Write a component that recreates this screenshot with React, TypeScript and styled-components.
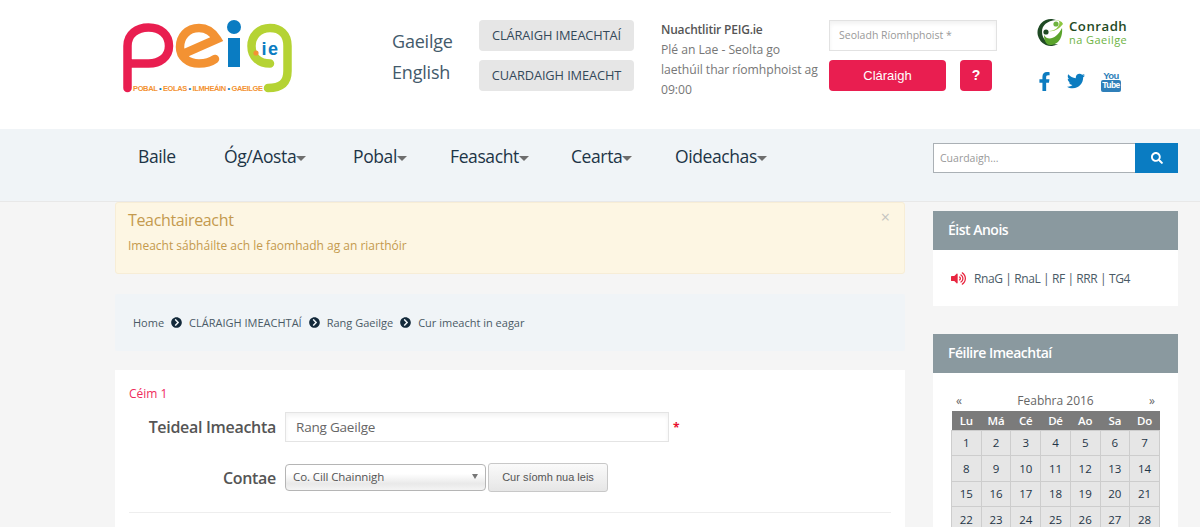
import React from "react";
import styled, { createGlobalStyle } from "styled-components";
import { FaChevronCircleRight, FaFacebookF, FaSearch, FaTwitter, FaVolumeUp } from "react-icons/fa";

const Global = createGlobalStyle`
  html, body { margin: 0; padding: 0; height: 100%; overflow: hidden; background: #f5f5f5; }
  body { font-family: "Open Sans", "Liberation Sans", sans-serif; }
  #root { height: 527px; overflow: hidden; }
  * { box-sizing: border-box; }
`;

const Header = styled.header`
  height: 129px; background: #fff; display: flex; align-items: flex-start; padding-left: 110px;
`;
const LogoSlot = styled.div` width: 282px; padding-top: 10px; `;
const LangCol = styled.div`
  width: 87px; padding-top: 28px; display: flex; flex-direction: column; gap: 5px;
  font-size: 18px; line-height: 26px; letter-spacing: -0.2px; color: #435a6b;
`;
const BtnCol = styled.div` width: 182px; padding-top: 20px; display: flex; flex-direction: column; gap: 9px; `;
const GreyBtn = styled.div`
  width: 155px; height: 31px; border-radius: 4px; background: #e6e6e6; color: #34495a;
  font-size: 12.8px; line-height: 31px; text-align: center; letter-spacing: -0.1px;
`;
const NewsCol = styled.div`
  width: 168px; padding: 20px 6px 0 0; font-size: 12.2px; line-height: 20px; color: #777; letter-spacing: -0.05px;
`;
const NewsTitle = styled.div` font-weight: 600; color: #555; font-size: 12px; letter-spacing: -0.2px; `;
const FormCol = styled.div` width: 208px; padding-top: 20px; `;
const EmailInput = styled.div`
  width: 168px; height: 31px; border: 1px solid #e2e2e2; padding-left: 9px; font-size: 10.5px; line-height: 29px; color: #999;
  box-shadow: inset 0 3px 4px #f2f2f2;
`;
const FormBtns = styled.div` display: flex; gap: 14px; margin-top: 9px; `;
const PinkBtn = styled.div<{ $w: number }>`
  width: ${(p) => p.$w}px; height: 31px; border-radius: 4px; background: #e91e50; color: #fff; text-align: center;
  font-family: "Liberation Sans", sans-serif; font-size: 13px; line-height: 31px;
`;
const QMark = styled.span` font-weight: 700; font-size: 14px; `;
const SocialCol = styled.div` width: 100px; padding-top: 18px; `;
const SocialRow = styled.div`
  display: flex; align-items: center; margin: 16px 0 0 -2.5px; height: 24px; color: #0c7cc0;
`;
const SocialSlot = styled.span<{ $w: number }>` width: ${(p) => p.$w}px; display: flex; `;
const YouTube = styled.span`
  display: flex; flex-direction: column; align-items: center; width: 17px; color: #2f7fb9;
  font-family: "Liberation Sans", sans-serif; font-weight: 700; line-height: 1;
`;
const YouWord = styled.span` font-size: 9.5px; letter-spacing: -0.5px; `;
const TubeWord = styled.span`
  font-size: 8.5px; letter-spacing: -0.5px; background: #2f7fb9; color: #fff; border-radius: 2px; padding: 1px 1px 2px;
`;

const Nav = styled.nav`
  height: 73px; background: #f0f4f7; border-bottom: 1px solid #e8e8e8; display: flex; padding-left: 138px;
`;
const NavItems = styled.div` display: flex; width: 795px; padding-top: 14px; `;
const NavItem = styled.div<{ $w: number }>`
  width: ${(p) => p.$w}px; font-size: 17.5px; font-weight: 500; line-height: 26px; color: #1d3446; letter-spacing: -0.4px; white-space: nowrap;
`;
const Caret = styled.span`
  display: inline-block; width: 0; height: 0; border-left: 5px solid transparent; border-right: 5px solid transparent;
  border-top: 5px solid #6e6e6e; vertical-align: 2px;
`;
const Search = styled.div` width: 245px; height: 30px; margin-top: 14px; display: flex; `;
const SearchBox = styled.div`
  flex: 1; background: #fff; border: 1px solid #aab0b5; border-right: 0; padding-left: 6px; font-size: 10.5px; line-height: 28px; color: #999;
`;
const SearchBtn = styled.div`
  width: 43px; background: #0a7cc2; color: #fff; display: flex; align-items: center; justify-content: center; font-size: 12px;
`;

const Body = styled.div` display: flex; padding-left: 115px; gap: 28px; `;
const Main = styled.main` width: 790px; display: flex; flex-direction: column; `;
const Alert = styled.div`
  height: 72px; background: #fdf6e3; border: 1px solid #f7edd6; border-radius: 3px; padding: 5px 12px; color: #c49a4e; position: relative;
`;
const AlertTitle = styled.div` font-size: 16px; line-height: 24px; letter-spacing: -0.35px; font-weight: 500; `;
const AlertText = styled.div` font-size: 12px; line-height: 20px; margin-top: 4px; `;
const Close = styled.span` position: absolute; top: 4px; right: 14px; font-size: 16px; line-height: 20px; color: #c4c4c0; `;
const Crumbs = styled.div`
  margin-top: 20px; height: 57px; background: #f0f4f7; border-radius: 2px; padding-left: 18px; display: flex; align-items: center; gap: 7px;
  font-size: 11px; color: #4a5a66;
`;
const CrumbIcon = styled(FaChevronCircleRight)` color: #13293a; font-size: 11px; `;
const Card = styled.section` margin-top: 19px; background: #fff; height: 200px; padding: 15px 14px 0; `;
const Step = styled.div` font-size: 12px; line-height: 18px; color: #ef2b5c; `;
const FormRow = styled.div<{ $mt: number }>` display: flex; align-items: center; margin-top: ${(p) => p.$mt}px; `;
const Label = styled.div`
  width: 147px; text-align: right; font-size: 16px; font-weight: 600; color: #555; margin-right: 9px; letter-spacing: -0.3px;
`;
const TitleInput = styled.input`
  width: 384px; height: 30px; border: 1px solid #e4e4e4; box-shadow: inset 0 3px 4px #f3f3f3; padding: 0 10px; outline: 0;
  font-family: inherit; font-size: 13.5px; color: #666; letter-spacing: -0.2px;
`;
const Star = styled.span` color: #e8102f; font-size: 12px; margin-left: 4px; font-weight: 700; `;
const SelectBox = styled.div`
  width: 201px; height: 27px; border: 1px solid #b5b5b5; border-radius: 4px; background: linear-gradient(#fff 35%, #e9e9e9 75%, #f4f4f4);
  display: flex; align-items: center; justify-content: space-between; padding: 0 7px 2px; font-size: 11.5px; color: #555; letter-spacing: -0.1px;
`;
const SelectArrow = styled.span`
  width: 0; height: 0; border-left: 3.5px solid transparent; border-right: 3.5px solid transparent; border-top: 5px solid #777;
`;
const AddBtn = styled.div`
  margin-left: 2px; width: 120px; height: 29px; border: 1px solid #c8c8c8; border-radius: 3px; background: linear-gradient(#fafafa, #e6e6e6);
  text-align: center; font-family: "Liberation Sans", sans-serif; font-size: 11px; line-height: 27px; color: #555;
`;
const Rule = styled.hr` margin: 20px 0 0; border: 0; border-top: 1px solid #eee; `;

const Side = styled.aside` width: 245px; padding-top: 9px; display: flex; flex-direction: column; gap: 28px; `;
const Panel = styled.section` background: #fff; `;
const PanelHead = styled.h3`
  margin: 0; height: 39px; background: #8a999f; color: #fff; padding-left: 15px; font-size: 14px; line-height: 38px; font-weight: 600; letter-spacing: -0.5px;
`;
const Listen = styled.div`
  height: 56px; display: flex; align-items: center; padding: 0 18px; gap: 8px; font-size: 12px; color: #4a5a66; letter-spacing: -0.4px;
`;
const SpeakerIcon = styled(FaVolumeUp)` color: #e8253f; font-size: 15px; `;
const CalWrap = styled.div` padding: 18px 18px 0; height: 200px; `;
const MonthRow = styled.div`
  display: flex; justify-content: space-between; padding: 0 5px; width: 209px; font-size: 12px; line-height: 20px; color: #666;
`;
const CalTable = styled.table` border-collapse: collapse; width: 209px; table-layout: fixed; margin: 0; `;
const Th = styled.th`
  background: #7b7b7b; color: #fff; height: 19px; padding: 0; font-size: 11.5px; font-weight: 600; letter-spacing: -0.2px;
`;
const Td = styled.td`
  background: #e6e6e6; border: 1px solid #cdcdcd; height: 25.6px; padding: 0; text-align: center; font-size: 11.5px; color: #1f3547; font-weight: 500;
`;

function PeigLogo() {
  return (
    <svg width="200" height="100" viewBox="0 0 200 100" fontFamily="Liberation Sans, sans-serif" role="img" aria-label="peig.ie">
      <g fill="none" strokeWidth="8.5" strokeLinecap="round">
        <path stroke="#e91e50" d="M17.5 78 V36 C17.5 24 27 17.5 38.5 17.5 C51 17.5 59 25 59 36 C59 47 50 53.5 38.5 53.5 H22" />
        <path stroke="#f39233" d="M73 44 L107 29 C102 21 96 18 89 18 C77 18 70 27 70 37 C70 47 78 53.5 89 53.5 C96 53.5 101 52 105 49" />
        <path stroke="#b5d334" d="M158 78 C171 78 177.5 73 177.5 61 V36 C177.5 24 170 18 160 18 C149 18 141.5 26 141.5 36 C141.5 47 149 53.5 160 53.5" />
      </g>
      <circle cx="124" cy="17" r="7" fill="#0a7cc2" />
      <rect x="118" y="28" width="12" height="29" fill="#0a7cc2" />
      <circle cx="146" cy="43" r="2.6" fill="#f39233" />
      <text x="151.5" y="45" fontSize="18" fontWeight="700" letterSpacing="1.5" fill="#0a7cc2">ie</text>
      <text x="23" y="81" fontSize="7.5" fontWeight="700" fill="#f39233" textLength="130">
        POBAL <tspan fill="#0a7cc2">•</tspan> EOLAS <tspan fill="#0a7cc2">•</tspan> ILMHEÁIN <tspan fill="#0a7cc2">•</tspan> GAEILGE
      </text>
    </svg>
  );
}

function ConradhLogo() {
  return (
    <svg width="92" height="30" viewBox="0 0 92 30" fontFamily="Open Sans, sans-serif" role="img" aria-label="Conradh na Gaeilge">
      <path d="M15 1 A13.5 13.5 0 1 0 21 26 C12 27 5 22 5 14 C5 7 10 3 19 2 Z" fill="#1f4a24" />
      <path d="M7 17 C11 24 20 20 25 10 C26 17 23 27 13 27 C9 27 7 22 7 17 Z" fill="#5aa32c" />
      <path d="M12 13 C17 14 22 11 26 6 C25 3 21 2 18 2 L22 3 C24 8 18 13 12 13 Z" fill="#8cc63f" />
      <circle cx="9" cy="14" r="2.6" fill="#1f4a24" />
      <circle cx="19" cy="6" r="2.6" fill="#6db33f" />
      <text x="32" y="13" fontSize="13.2" fontWeight="600" letterSpacing="0.5" fill="#1f4a24">Conradh</text>
      <text x="32" y="26" fontSize="11" letterSpacing="0.45" fill="#6db33f">na Gaeilge</text>
    </svg>
  );
}

const navItems: { label: string; w: number; caret?: boolean }[] = [
  { label: "Baile", w: 86 },
  { label: "Óg/Aosta", w: 129, caret: true },
  { label: "Pobal", w: 97, caret: true },
  { label: "Feasacht", w: 121, caret: true },
  { label: "Cearta", w: 104, caret: true },
  { label: "Oideachas", w: 120, caret: true },
];
const days = ["Lu", "Má", "Cé", "Dé", "Ao", "Sa", "Do"];
const weeks = [0, 1, 2, 3].map((w) => days.map((_, d) => w * 7 + d + 1));

export default function App() {
  return (
    <>
      <Global />
      <Header>
        <LogoSlot><PeigLogo /></LogoSlot>
        <LangCol><span>Gaeilge</span><span>English</span></LangCol>
        <BtnCol>
          <GreyBtn>CLÁRAIGH IMEACHTAÍ</GreyBtn>
          <GreyBtn>CUARDAIGH IMEACHT</GreyBtn>
        </BtnCol>
        <NewsCol>
          <NewsTitle>Nuachtlitir PEIG.ie</NewsTitle>
          Plé an Lae - Seolta go laethúil thar ríomhphoist ag 09:00
        </NewsCol>
        <FormCol>
          <EmailInput>Seoladh Ríomhphoist *</EmailInput>
          <FormBtns>
            <PinkBtn $w={117}>Cláraigh</PinkBtn>
            <PinkBtn $w={32}><QMark>?</QMark></PinkBtn>
          </FormBtns>
        </FormCol>
        <SocialCol>
          <ConradhLogo />
          <SocialRow>
            <SocialSlot $w={32}><FaFacebookF size={19} /></SocialSlot>
            <SocialSlot $w={36}><FaTwitter size={18} /></SocialSlot>
            <YouTube><YouWord>You</YouWord><TubeWord>Tube</TubeWord></YouTube>
          </SocialRow>
        </SocialCol>
      </Header>
      <Nav>
        <NavItems>
          {navItems.map((n) => (
            <NavItem key={n.label} $w={n.w}>{n.label}{n.caret && <Caret />}</NavItem>
          ))}
        </NavItems>
        <Search>
          <SearchBox>Cuardaigh...</SearchBox>
          <SearchBtn><FaSearch /></SearchBtn>
        </Search>
      </Nav>
      <Body>
        <Main>
          <Alert>
            <AlertTitle>Teachtaireacht</AlertTitle>
            <AlertText>Imeacht sábháilte ach le faomhadh ag an riarthóir</AlertText>
            <Close>×</Close>
          </Alert>
          <Crumbs>
            <span>Home</span><CrumbIcon />
            <span>CLÁRAIGH IMEACHTAÍ</span><CrumbIcon />
            <span>Rang Gaeilge</span><CrumbIcon />
            <span>Cur imeacht in eagar</span>
          </Crumbs>
          <Card>
            <Step>Céim 1</Step>
            <FormRow $mt={9}>
              <Label>Teideal Imeachta</Label>
              <TitleInput value="Rang Gaeilge" readOnly />
              <Star>*</Star>
            </FormRow>
            <FormRow $mt={21}>
              <Label>Contae</Label>
              <SelectBox>Co. Cill Chainnigh<SelectArrow /></SelectBox>
              <AddBtn>Cur síomh nua leis</AddBtn>
            </FormRow>
            <Rule />
          </Card>
        </Main>
        <Side>
          <Panel>
            <PanelHead>Éist Anois</PanelHead>
            <Listen><SpeakerIcon /><span>RnaG | RnaL | RF | RRR | TG4</span></Listen>
          </Panel>
          <Panel>
            <PanelHead>Féilire Imeachtaí</PanelHead>
            <CalWrap>
              <MonthRow><span>«</span><span>Feabhra 2016</span><span>»</span></MonthRow>
              <CalTable>
                <thead><tr>{days.map((d) => <Th key={d}>{d}</Th>)}</tr></thead>
                <tbody>
                  {weeks.map((w) => <tr key={w[0]}>{w.map((d) => <Td key={d}>{d}</Td>)}</tr>)}
                </tbody>
              </CalTable>
            </CalWrap>
          </Panel>
        </Side>
      </Body>
    </>
  );
}
